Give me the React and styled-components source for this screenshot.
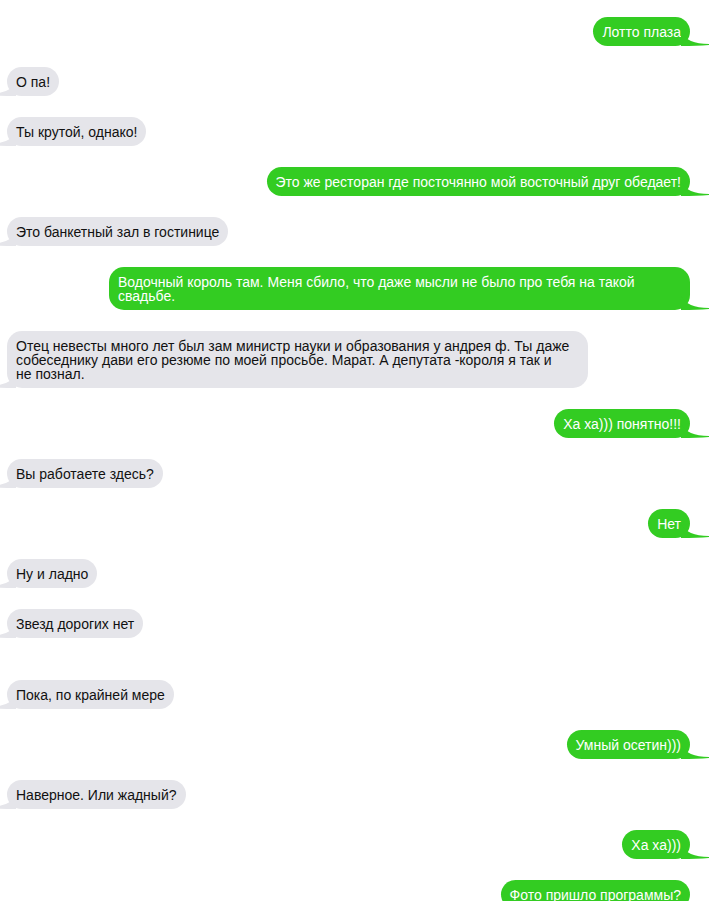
import styled, { createGlobalStyle, css } from "styled-components";

const GREEN = "#33cc22";
const GRAY = "#e5e5ea";

const GlobalStyle = createGlobalStyle`
  html, body {
    margin: 0;
    padding: 0;
    overflow: hidden;
    background: #fff;
  }
  body {
    font-family: "Liberation Sans", Arial, sans-serif;
  }
`;

const Thread = styled.div`
  display: flex;
  flex-direction: column;
  gap: 21px;
  padding: 17px 22px 40px 7px;
`;

const Spacer = styled.div`
  height: ${(p) => p.$h}px;
  margin-top: -21px;
`;

const Bubble = styled.div`
  position: relative;
  box-sizing: border-box;
  max-width: 581px;
  padding: 7.5px 9px;
  border-radius: 15px;
  font-size: 14px;
  line-height: 14px;
  align-self: ${(p) => (p.$me ? "flex-end" : "flex-start")};
  background: ${(p) => (p.$me ? GREEN : GRAY)};
  color: ${(p) => (p.$me ? "#fff" : "#111")};

  &::after {
    content: "";
    position: absolute;
    bottom: 0;
    width: 28px;
    height: 14px;
    background: inherit;
    clip-path: path("M0 0 Q 6 12 28 12 L 28 13 Q 16 14 0 14 Z");
    ${(p) =>
      p.$me
        ? css`
            right: -19px;
          `
        : css`
            left: -19px;
            transform: scaleX(-1);
          `}
  }
`;

const messages = [
  { me: true, text: "Лотто плаза" },
  { me: false, text: "О па!" },
  { me: false, text: "Ты крутой, однако!" },
  { me: true, text: "Это же ресторан где посточянно мой восточный друг обедает!" },
  { me: false, text: "Это банкетный зал в гостинице" },
  {
    me: true,
    text: "Водочный король там. Меня сбило, что даже мысли не было про тебя на такой свадьбе.",
  },
  {
    me: false,
    text: "Отец невесты много лет был зам министр науки и образования у андрея ф. Ты даже собеседнику дави его резюме по моей просьбе. Марат. А депутата -короля я так и не\u00a0познал.",
  },
  { me: true, text: "Ха ха))) понятно!!!" },
  { me: false, text: "Вы работаете здесь?" },
  { me: true, text: "Нет" },
  { me: false, text: "Ну и ладно" },
  { me: false, text: "Звезд дорогих нет" },
  { gap: 21 },
  { me: false, text: "Пока, по крайней мере" },
  { me: true, text: "Умный осетин)))" },
  { me: false, text: "Наверное. Или жадный?" },
  { me: true, text: "Ха ха)))" },
  { me: true, text: "Фото пришло программы?" },
];

export default function App() {
  return (
    <>
      <GlobalStyle />
      <Thread>
        {messages.map((m, i) =>
          m.gap ? (
            <Spacer key={i} $h={m.gap} />
          ) : (
            <Bubble key={i} $me={m.me}>
              {m.text}
            </Bubble>
          )
        )}
      </Thread>
    </>
  );
}
